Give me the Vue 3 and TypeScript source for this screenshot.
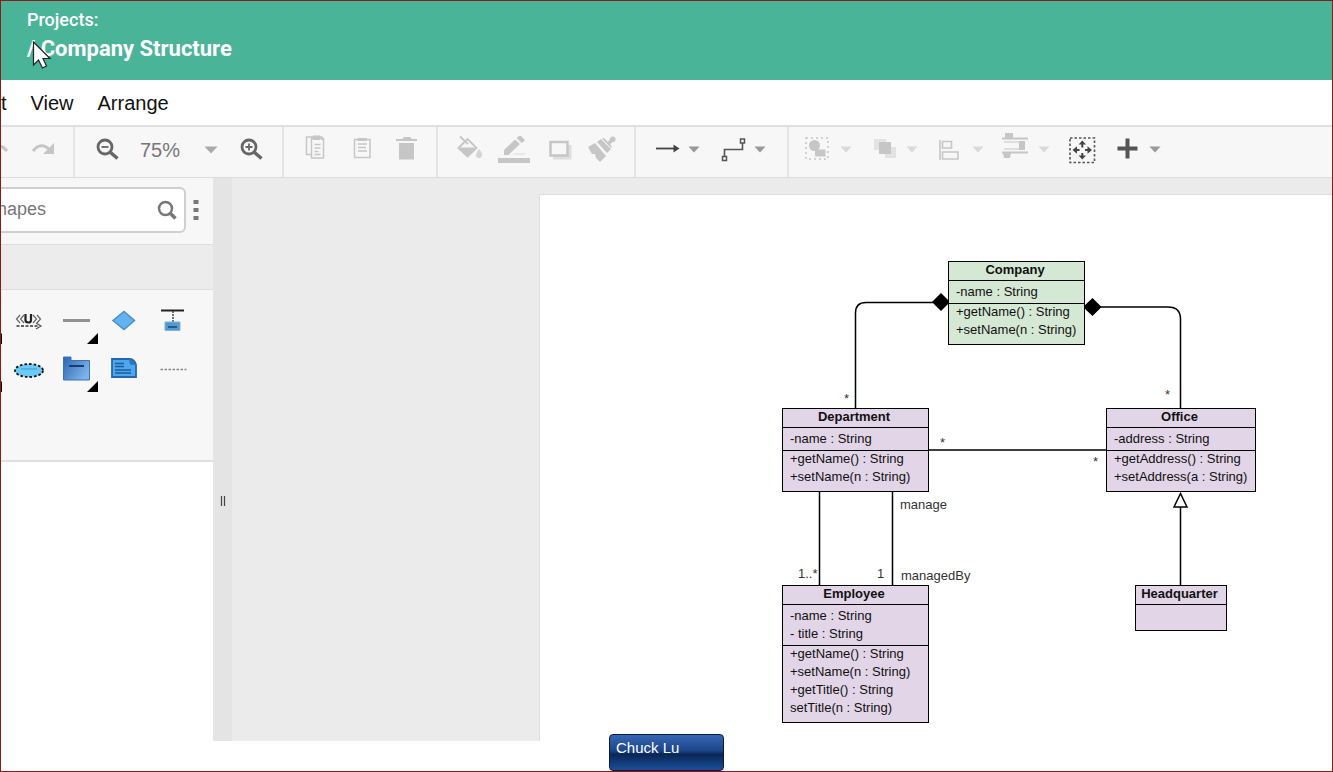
<script setup lang="ts">
import { ref } from 'vue'

interface ClassNode {
  id: string
  title: string
  attributes: string[]
  methods: string[]
}

const zoomLevel = ref('75%')
const query = ref('')
const menus: string[] = ['Edit', 'View', 'Arrange']

const nodes: ClassNode[] = [
  { id: 'company', title: 'Company', attributes: ['-name : String'], methods: ['+getName() : String', '+setName(n : String)'] },
  { id: 'department', title: 'Department', attributes: ['-name : String'], methods: ['+getName() : String', '+setName(n : String)'] },
  { id: 'office', title: 'Office', attributes: ['-address : String'], methods: ['+getAddress() : String', '+setAddress(a : String)'] },
  {
    id: 'employee',
    title: 'Employee',
    attributes: ['-name : String', '- title : String'],
    methods: ['+getName() : String', '+setName(n : String)', '+getTitle() : String', 'setTitle(n : String)'],
  },
  { id: 'headquarter', title: 'Headquarter', attributes: [], methods: [] },
]
</script>

<template>
  <div class="app">
    <svg class="defs" aria-hidden="true">
      <symbol id="caret" viewBox="0 0 14 8"><path d="M0.500 0.500H13.500L7 7.500Z" fill="currentColor" /></symbol>
      <linearGradient id="folder" x1="0" y1="0" x2="1" y2="0.600">
        <stop offset="0" stop-color="#2a66b0" />
        <stop offset="1" stop-color="#7fb4ea" />
      </linearGradient>
    </svg>

    <header class="header">
      <p class="crumb">Projects:</p>
      <h1 class="title">/ Company Structure</h1>
      <svg class="pointer" viewBox="0 0 20 28" aria-hidden="true">
        <path d="M1.500 1V24L6.500 19L10.500 27L14.500 25L11 17.500H18Z" fill="#fff" stroke="#222" stroke-width="1.200" />
      </svg>
    </header>

    <nav class="menubar">
      <button v-for="m in menus" :key="m" type="button" class="menu">{{ m }}</button>
    </nav>

    <div class="toolbar">
      <div class="group group-history">
        <button type="button" class="tool faint" aria-label="Undo">
          <svg viewBox="0 0 46 50"><path d="M34 24Q26 14 18 24" fill="none" stroke="currentColor" stroke-width="3" /></svg>
        </button>
        <button type="button" class="tool faint" aria-label="Redo">
          <svg viewBox="0 0 46 50">
            <path d="M14 24Q22 14 31 23" fill="none" stroke="currentColor" stroke-width="3" />
            <path d="M35 16V27H24Z" fill="currentColor" />
          </svg>
        </button>
      </div>

      <div class="group">
        <button type="button" class="tool" aria-label="Zoom out">
          <svg viewBox="0 0 46 50" fill="none" stroke="currentColor">
            <circle cx="23" cy="20" r="7" stroke-width="2.800" />
            <path d="M28 25L35.500 31.500" stroke-width="3.500" />
            <path d="M19.500 20H26.500" stroke-width="1.800" />
          </svg>
        </button>
        <label class="zoom">
          <select v-model="zoomLevel" aria-label="Zoom">
            <option>75%</option>
          </select>
          <svg class="caret" aria-hidden="true"><use href="#caret" /></svg>
        </label>
        <button type="button" class="tool" aria-label="Zoom in">
          <svg viewBox="0 0 46 50" fill="none" stroke="currentColor">
            <circle cx="20" cy="20" r="7" stroke-width="2.800" />
            <path d="M25 25L32.500 31.500" stroke-width="3.500" />
            <path d="M16.500 20H23.500M20 16.500V23.500" stroke-width="1.800" />
          </svg>
        </button>
      </div>

      <div class="group">
        <button type="button" class="tool faint" aria-label="Copy">
          <svg viewBox="0 0 46 50" fill="none" stroke="currentColor" stroke-width="1.500">
            <path d="M20 27.500H15.500V10H31V13M20.500 11.500H32.500V31H20.500Z" />
            <path d="M22 10H29M23.500 17.500H29.500M23.500 21H29.500M23.500 24.500H27.500M23.500 27.500H29.500" />
            <path d="M22 8.500H29V13H22Z" fill="currentColor" stroke="none" />
          </svg>
        </button>
        <button type="button" class="tool faint" aria-label="Paste">
          <svg viewBox="0 0 46 50" fill="none" stroke="currentColor" stroke-width="1.500">
            <path d="M17.500 12.500H33V30.500H17.500Z" />
            <path d="M21 17H30M21 20.500H29M21 24H30" />
            <path d="M20.500 11H30V14H20.500Z" fill="currentColor" stroke="none" />
          </svg>
        </button>
        <button type="button" class="tool faint" aria-label="Delete">
          <svg viewBox="0 0 46 50" fill="currentColor"><path d="M13 12H19L21 10H27L29 12H34V14H13ZM16 16H31V32.500H16Z" /></svg>
        </button>
      </div>

      <div class="group group-style">
        <button type="button" class="tool faint" aria-label="Fill color">
          <svg viewBox="0 0 46 50">
            <path d="M15 9.500L23 17M13.500 21L22.500 12L31.500 21L22.500 29.500Z" fill="none" stroke="currentColor" stroke-width="1.800" />
            <path d="M13 20.500H32L22.500 30Z" fill="currentColor" />
            <path d="M34 22Q37.500 26 37 28A3 3 0 0 1 31 28Q31 26 34 22Z" fill="currentColor" opacity="0.700" />
          </svg>
        </button>
        <button type="button" class="tool faint" aria-label="Line color">
          <svg viewBox="0 0 46 50" fill="currentColor">
            <path d="M7 31H39V36H7ZM13 28V23L24 12.500L29 17L17.500 28ZM25.500 11L28 9H30L33.500 12.500V14L30.500 16Z" />
            <path d="M21 28L24 26H34V28Z" opacity="0.300" />
          </svg>
        </button>
        <button type="button" class="tool faint" aria-label="Shadow">
          <svg viewBox="0 0 46 50">
            <path d="M16 18H34.500V32.500H16Z" fill="currentColor" opacity="0.500" />
            <path d="M13.500 15H30.500V28.500H13.500Z" fill="#f7f7f7" stroke="currentColor" stroke-width="2.500" />
          </svg>
        </button>
        <button type="button" class="tool tool-narrow faint" aria-label="Format painter">
          <svg viewBox="0 0 46 50" fill="currentColor">
            <path d="M5 20L12 16L23 29L17 35L13 31L12 27L9 27ZM14 15L18 12L28 22L24 26ZM19 11.500L21 11L25 15L27 12A2.800 2.800 0 1 1 30 15L27 17L29 20L28 21Z" />
          </svg>
        </button>
      </div>

      <div class="group group-line">
        <button type="button" class="tool tool-wide" aria-label="Connection">
          <svg viewBox="0 0 66 50">
            <path d="M13 21.500H32" stroke="#444" stroke-width="1.800" />
            <path d="M30.500 17.500L36.500 21.500L30.500 25.500Z" fill="#444" />
            <use href="#caret" x="45" y="19" width="12" height="7" class="mid" />
          </svg>
        </button>
        <button type="button" class="tool tool-wide" aria-label="Waypoints">
          <svg viewBox="0 0 66 50">
            <path d="M15.500 29.500V22.500H33.500V16" fill="none" stroke="#555" stroke-width="1.600" />
            <path d="M13.500 29.500H17.500V33.500H13.500ZM31.500 12H35.500V16H31.500Z" fill="#f7f7f7" stroke="#555" stroke-width="1.500" />
            <use href="#caret" x="45" y="19" width="12" height="7" class="mid" />
          </svg>
        </button>
      </div>

      <div class="group group-last">
        <button type="button" class="tool tool-wide faint" aria-label="Group">
          <svg viewBox="0 0 66 50">
            <path d="M10 11H32V32H10Z" fill="none" stroke="currentColor" stroke-width="1.500" stroke-dasharray="2 3" />
            <circle cx="18.500" cy="18.500" r="5.500" fill="currentColor" />
            <path d="M19 22.500H29.500V29.500H19Z" fill="currentColor" />
            <use href="#caret" x="44" y="19" width="12" height="7" class="pale" />
          </svg>
        </button>
        <button type="button" class="tool tool-wide faint" aria-label="Order">
          <svg viewBox="0 0 66 50" fill="currentColor">
            <path d="M12 12H24V23H12ZM23 20H34V31H23Z" opacity="0.400" />
            <path d="M17 15H29V27H17Z" />
            <use href="#caret" x="44" y="19" width="12" height="7" class="pale" />
          </svg>
        </button>
        <button type="button" class="tool tool-wide faint" aria-label="Align">
          <svg viewBox="0 0 66 50">
            <path d="M12 13V33M14.500 14.500H23.500V21H14.500ZM14.500 25H30V32H14.500Z" fill="none" stroke="currentColor" stroke-width="1.600" />
            <use href="#caret" x="44" y="19" width="12" height="7" class="pale" />
          </svg>
        </button>
        <button type="button" class="tool tool-wide faint" aria-label="Distribute">
          <svg viewBox="0 0 66 50" fill="currentColor">
            <path d="M8 10.500H34V12.500H8ZM8 24.500H34V26.500H8ZM11 6H19V10.500H11ZM25 14H31V23H25ZM9 26H17L16 31H10ZM10 14.500H27V15.500H10ZM10 21.500H27V22.500H10Z" />
            <use href="#caret" x="44" y="19" width="12" height="7" class="pale" />
          </svg>
        </button>
        <button type="button" class="tool" aria-label="Fit">
          <svg viewBox="0 0 46 50">
            <path d="M10 11H34.500V35.500H10Z" fill="none" stroke="#555" stroke-width="1.600" stroke-dasharray="2.500 2" />
            <path d="M22.300 13.500L26 17.500H23.300V20.500H21.300V17.500H18.600ZM22.300 32.500L26 28.500H23.300V26H21.300V28.500H18.600ZM12.500 23L17 19.300V22H19.500V24H17V26.700ZM32 23L27.500 19.300V22H25V24H27.500V26.700Z" fill="#444" />
          </svg>
        </button>
        <button type="button" class="tool tool-wide" aria-label="Insert">
          <svg viewBox="0 0 66 50">
            <path d="M11.500 21.500H31.500M21.500 11.500V31.500" stroke="#555" stroke-width="4" />
            <use href="#caret" x="43" y="19" width="12" height="7" class="mid" />
          </svg>
        </button>
      </div>
    </div>

    <main class="workspace">
      <aside class="sidebar">
        <div class="search-row">
          <label class="search">
            <input v-model="query" type="text" placeholder="Shapes" aria-label="Shapes" />
            <svg viewBox="0 0 20 20" fill="none" stroke="#777" aria-hidden="true">
              <circle cx="8.500" cy="8.500" r="6.500" stroke-width="2.500" />
              <path d="M13 13L18.500 18.500" stroke-width="3.500" />
            </svg>
          </label>
          <button type="button" class="more" aria-label="More">
            <svg viewBox="0 0 6 22" fill="#777"><path d="M0.500 1H5.500V5H0.500ZM0.500 9H5.500V13H0.500ZM0.500 17H5.500V21H0.500Z" /></svg>
          </button>
        </div>
        <div class="section-bar"></div>
        <div class="palette">
          <button type="button" aria-label="Shape with variants"><svg viewBox="0 0 48 48"><path d="M46 37V48H35Z" /></svg></button>
          <button type="button" aria-label="Use">
            <svg viewBox="0 0 48 48" fill="none" stroke="#666" stroke-width="1.200">
              <path d="M16 19L12.500 23L16 27M20 19L16.500 23L20 27M29 19L32.500 23L29 27M33 19L36.500 23L33 27" />
              <path d="M21.500 18V24Q21.500 26.500 24.300 26.500T27 24V18" stroke="#222" stroke-width="2.200" />
              <path d="M12.500 30H35" stroke="#333" stroke-width="1.500" stroke-dasharray="3 1.500" />
              <path d="M32 27L37 30L32 33" stroke="#555" />
            </svg>
          </button>
          <button type="button" aria-label="Line">
            <svg viewBox="0 0 48 48"><path d="M11 24.500H38" stroke="#919191" stroke-width="3" /><path d="M46 37V48H35Z" /></svg>
          </button>
          <button type="button" aria-label="Decision">
            <svg viewBox="0 0 48 48"><path d="M24 15.500L34.500 24.500L24 33.500L13 24.500Z" fill="#63b3f2" stroke="#4b8fc8" stroke-width="1.500" /></svg>
          </button>
          <button type="button" aria-label="Lifeline">
            <svg viewBox="0 0 48 48">
              <path d="M13 14.500H36" stroke="#222" stroke-width="2" />
              <path d="M25 15V26" stroke="#444" stroke-width="1.500" stroke-dasharray="2 1" />
              <path d="M17 26H32V34.500H17Z" fill="#5299cd" stroke="#7db3dc" />
              <path d="M20 31H29" stroke="#285a8a" stroke-width="2" />
            </svg>
          </button>
          <button type="button" aria-label="Shape with variants"><svg viewBox="0 0 48 48"><path d="M46 37V48H35Z" /></svg></button>
          <button type="button" aria-label="Use case">
            <svg viewBox="0 0 48 48">
              <ellipse cx="25" cy="26.500" rx="14" ry="6.500" fill="#6ccaf7" stroke="#111" stroke-width="1.800" stroke-dasharray="2.500 2" />
              <path d="M17 25H33" stroke="#4099c6" />
            </svg>
          </button>
          <button type="button" aria-label="Package">
            <svg viewBox="0 0 48 48">
              <path d="M11.500 13H19V16.500H37.500V36H11.500Z" fill="url(#folder)" stroke="#3b73b8" />
              <path d="M17 22H32" stroke="#173d73" stroke-width="2" />
              <path d="M46 37V48H35Z" />
            </svg>
          </button>
          <button type="button" aria-label="Note">
            <svg viewBox="0 0 48 48">
              <path d="M12 15H30Q35 16 36 21V33H12Z" fill="#4ca6f0" stroke="#2368ac" stroke-width="1.800" />
              <path d="M29 15L30 20.500L36 21Q35 16 29 15Z" fill="#2c74bb" />
              <path d="M15 19.500H24M15 22.500H24M15 26H31M15 29H31" stroke="#225b94" stroke-width="1.500" />
            </svg>
          </button>
          <button type="button" aria-label="Dashed line">
            <svg viewBox="0 0 48 48"><path d="M12.500 25.500H38.500" stroke="#888" stroke-width="1.600" stroke-dasharray="2.500 1.500" /></svg>
          </button>
        </div>
      </aside>

      <div class="splitter">
        <svg viewBox="0 0 6 12" aria-hidden="true"><path d="M1.500 1V11M4.500 1V11" stroke="#444" stroke-width="1.200" /></svg>
      </div>

      <div class="canvas">
        <div class="page">
          <svg class="edges" width="760" height="540" fill="none" stroke="#000" stroke-width="1.500" aria-hidden="true">
            <path d="M393 107.500H326Q315.500 107.500 315.500 118V213" />
            <path d="M560 112H628Q640.500 112 640.500 124V213" />
            <path d="M389 255H566M279.500 297V390M352.500 297V390M640.500 312V390" />
            <path d="M393 107L401 99L409 107L401 115ZM544 112L552.500 104L560.500 112L552.500 120Z" fill="#000" />
            <path d="M640.500 298.500L647 312H634Z" fill="#fff" />
          </svg>

          <section v-for="n in nodes" :key="n.id" class="node" :class="n.id">
            <h2>{{ n.title }}</h2>
            <ul v-if="n.attributes.length" class="attributes">
              <li v-for="a in n.attributes" :key="a">{{ a }}</li>
            </ul>
            <ul v-if="n.methods.length" class="methods">
              <li v-for="f in n.methods" :key="f">{{ f }}</li>
            </ul>
          </section>

          <span class="label star-department">*</span>
          <span class="label star-office">*</span>
          <span class="label star-from">*</span>
          <span class="label star-to">*</span>
          <span class="label label-manage">manage</span>
          <span class="label label-managed">managedBy</span>
          <span class="label label-many">1..*</span>
          <span class="label label-one">1</span>
        </div>
      </div>
    </main>

    <footer class="footer"><div class="user">Chuck Lu</div></footer>
  </div>
</template>

<style>
body {
  margin: 0;
}
</style>

<style scoped>
.app {
  box-sizing: border-box;
  min-height: 100vh;
  display: flex;
  flex-direction: column;
  overflow: hidden;
  border: 1px solid #8c1c1c;
  background: #fff;
  font-family: "Liberation Sans", Arial, sans-serif;
  color: #111;
}
.defs {
  position: absolute;
  width: 0;
  height: 0;
}
button {
  padding: 0;
  border: 0;
  background: none;
  font: inherit;
  color: inherit;
}
svg {
  display: block;
}
.header {
  position: relative;
  box-sizing: border-box;
  height: 79px;
  padding: 8px 26px;
  background: #4ab498;
  color: #fff;
  font-family: Roboto, "Liberation Sans", sans-serif;
}
.crumb,
.title {
  margin: 0;
}
.crumb {
  font-size: 18px;
  font-weight: 500;
  line-height: 22px;
}
.title {
  padding-top: 4px;
  font-size: 22px;
  font-weight: 700;
  line-height: 28px;
}
.pointer {
  position: absolute;
  left: 31px;
  top: 40px;
  width: 20px;
  height: 28px;
}
.menubar {
  display: flex;
  gap: 24px;
  height: 45px;
  margin-left: -29px;
  font-size: 20px;
}
.menu {
  padding-top: 2px;
}
.toolbar {
  display: flex;
  height: 50px;
  border-top: 2px solid #e0e0e0;
  border-bottom: 1px solid #dcdcdc;
  background: #f7f7f7;
  color: #666;
}
.group {
  display: flex;
  align-items: center;
  padding: 0 7px;
  border-right: 2px solid #e4e4e4;
}
.group-history {
  box-sizing: border-box;
  width: 74px;
  justify-content: flex-end;
  padding: 0 8px;
  overflow: hidden;
}
.group-line {
  padding-right: 12px;
}
.group-last {
  flex: 1;
  border-right: 0;
}
.tool,
.tool svg {
  flex: none;
  width: 46px;
  height: 50px;
}
.tool-narrow {
  width: 44px;
}
.tool-wide,
.tool-wide svg {
  width: 66px;
}
.faint {
  color: #c6c6c6;
}
.mid {
  color: #999;
}
.pale {
  color: #d9d9d9;
}
.zoom {
  display: flex;
  align-items: center;
  box-sizing: border-box;
  width: 101px;
  padding: 0 0 4px 12px;
}
.zoom select {
  appearance: none;
  width: 64px;
  padding: 0;
  border: 0;
  background: none;
  font: 20px/24px "Liberation Sans", Arial, sans-serif;
  color: #777;
}
.caret {
  width: 14px;
  height: 8px;
  color: #aaa;
}
.workspace {
  flex: 1;
  display: flex;
}
.sidebar {
  width: 212px;
  overflow: hidden;
}
.search-row {
  box-sizing: border-box;
  display: flex;
  align-items: center;
  gap: 7px;
  height: 66px;
  padding-bottom: 2px;
  background: #f7f7f7;
}
.search {
  box-sizing: border-box;
  display: flex;
  align-items: center;
  width: 209px;
  height: 46px;
  margin-left: -24px;
  padding: 0 7px 0 6px;
  border: 2px solid #cfcfcf;
  border-radius: 6px;
  background: #fff;
}
.search input {
  flex: 1;
  min-width: 0;
  padding: 0 0 2px;
  border: 0;
  background: none;
  font: 18px/24px "Liberation Sans", Arial, sans-serif;
}
.search input::placeholder {
  color: #777;
}
.search svg {
  width: 20px;
  height: 20px;
}
.more svg {
  width: 6px;
  height: 22px;
}
.section-bar {
  height: 44px;
  border: solid #dedede;
  border-width: 1px 0;
  background: #ececec;
}
.palette {
  display: grid;
  grid-template-columns: repeat(5, 48px);
  grid-auto-rows: 48px;
  height: 164px;
  margin-left: -45px;
  padding-top: 6px;
  border-bottom: 2px solid #e0e0e0;
  background: #f7f7f7;
}
.palette svg {
  width: 48px;
  height: 48px;
}
.splitter {
  display: flex;
  align-items: flex-start;
  box-sizing: border-box;
  width: 19px;
  padding: 317px 0 0 7px;
  background: #e4e4e4;
}
.splitter svg {
  width: 6px;
  height: 12px;
}
.canvas {
  flex: 1;
  display: flex;
  padding: 16px 0 0 307px;
  background: #ebebeb;
}
.page {
  position: relative;
  flex: 1;
  overflow: hidden;
  border: solid #dedede;
  border-width: 1px 0 0 1px;
  background: #fff;
}
.edges {
  position: absolute;
  left: 0;
  top: 0;
}
.node {
  position: absolute;
  box-sizing: border-box;
  border: 1px solid #000;
  background: #e1d5e7;
  font-size: 13px;
  line-height: 18px;
}
.node h2 {
  margin: 0;
  padding: 0 3px 2px 0;
  border-bottom: 1px solid #000;
  font-size: 13px;
  line-height: 16px;
  text-align: center;
}
.node ul {
  margin: 0;
  padding: 0 0 0 7px;
  list-style: none;
  white-space: nowrap;
}
.node .attributes {
  padding-top: 2px;
  padding-bottom: 2px;
  border-bottom: 1px solid #000;
}
.node .methods {
  margin-top: -1px;
}
.company {
  left: 408px;
  top: 66px;
  width: 137px;
  height: 84px;
  background: #d5e8d4;
}
.department {
  left: 242px;
  top: 213px;
  width: 147px;
  height: 84px;
}
.office {
  left: 566px;
  top: 213px;
  width: 150px;
  height: 84px;
}
.employee {
  left: 242px;
  top: 390px;
  width: 147px;
  height: 138px;
}
.headquarter {
  left: 595px;
  top: 390px;
  width: 92px;
  height: 46px;
}
.label {
  position: absolute;
  font-size: 13px;
  line-height: 18px;
  color: #333;
}
.star-department {
  left: 304px;
  top: 195px;
}
.star-office {
  left: 625px;
  top: 191px;
}
.star-from {
  left: 400px;
  top: 239px;
}
.star-to {
  left: 553px;
  top: 258px;
}
.label-manage {
  left: 360px;
  top: 301px;
}
.label-managed {
  left: 361px;
  top: 372px;
}
.label-many {
  left: 258px;
  top: 370px;
}
.label-one {
  left: 337px;
  top: 370px;
}
.footer {
  position: relative;
  display: flex;
  justify-content: center;
  height: 30px;
}
.user {
  position: absolute;
  bottom: 0;
  box-sizing: border-box;
  width: 115px;
  height: 37px;
  padding: 4px 6px;
  border: 1px solid #0a1c3c;
  border-radius: 4px;
  background: linear-gradient(#3566b4, #1c4588 45%, #082656 55%, #1c4f98);
  font-size: 15px;
  line-height: 18px;
  color: #fff;
}
</style>
